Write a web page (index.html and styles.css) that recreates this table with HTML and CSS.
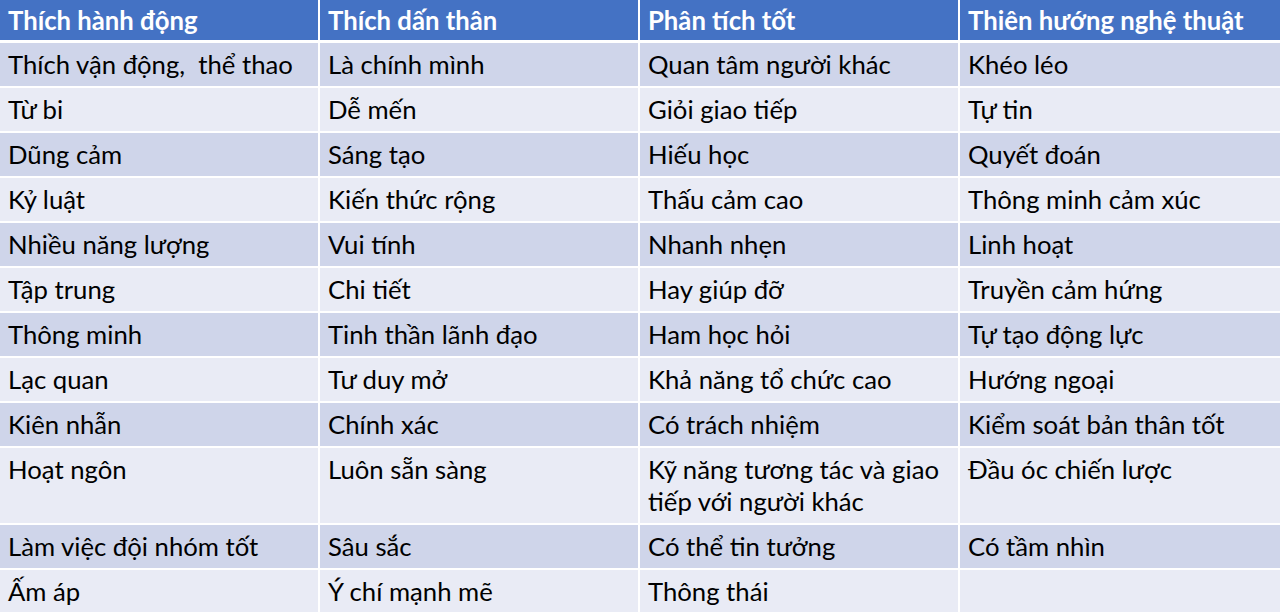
FILE: index.html
```html
<!DOCTYPE html>
<html lang="vi">
<head>
<meta charset="utf-8">
<link rel="stylesheet" href="styles.css">
</head>
<body>
<div class="table">
  <div class="row head"><div>Thích hành động</div><div>Thích dấn thân</div><div>Phân tích tốt</div><div>Thiên hướng nghệ thuật</div></div>
  <div class="row odd"><div>Thích vận động,&nbsp; thể thao</div><div>Là chính mình</div><div>Quan tâm người khác</div><div>Khéo léo</div></div>
  <div class="row even"><div>Từ bi</div><div>Dễ mến</div><div>Giỏi giao tiếp</div><div>Tự tin</div></div>
  <div class="row odd"><div>Dũng cảm</div><div>Sáng tạo</div><div>Hiếu học</div><div>Quyết đoán</div></div>
  <div class="row even"><div>Kỷ luật</div><div>Kiến thức rộng</div><div>Thấu cảm cao</div><div>Thông minh cảm xúc</div></div>
  <div class="row odd"><div>Nhiều năng lượng</div><div>Vui tính</div><div>Nhanh nhẹn</div><div>Linh hoạt</div></div>
  <div class="row even"><div>Tập trung</div><div>Chi tiết</div><div>Hay giúp đỡ</div><div>Truyền cảm hứng</div></div>
  <div class="row odd"><div>Thông minh</div><div>Tinh thần lãnh đạo</div><div>Ham học hỏi</div><div>Tự tạo động lực</div></div>
  <div class="row even"><div>Lạc quan</div><div>Tư duy mở</div><div>Khả năng tổ chức cao</div><div>Hướng ngoại</div></div>
  <div class="row odd"><div>Kiên nhẫn</div><div>Chính xác</div><div>Có trách nhiệm</div><div>Kiểm soát bản thân tốt</div></div>
  <div class="row even"><div>Hoạt ngôn</div><div>Luôn sẵn sàng</div><div>Kỹ năng tương tác và giao tiếp với người khác</div><div>Đầu óc chiến lược</div></div>
  <div class="row odd"><div>Làm việc đội nhóm tốt</div><div>Sâu sắc</div><div>Có thể tin tưởng</div><div>Có tầm nhìn</div></div>
  <div class="row even"><div>Ấm áp</div><div>Ý chí mạnh mẽ</div><div>Thông thái</div><div></div></div>
</div>
</body>
</html>
```
FILE: styles.css
```css
html, body {
  margin: 0;
  padding: 0;
  background: #ffffff;
  overflow: hidden;
}
body {
  width: 1280px;
  height: 612px;
}
.table {
  display: grid;
  grid-template-columns: 318px 318px 318px 320px;
  gap: 2px;
  background: #ffffff;
  font-family: "Lato", "Open Sans", sans-serif;
  font-size: 25.7px;
  color: #000000;
}
.row {
  display: contents;
}
.row > div {
  padding: 4.5px 9px 6.5px 8px;
  line-height: 32px;
  min-height: 32px;
}
.head > div {
  background: #4472c4;
  color: #ffffff;
  font-weight: 700;
  padding: 4px 9px 4px 8px;
  margin-bottom: 1px;
}
.odd > div {
  background: #cfd5ea;
}
.even > div {
  background: #e9ebf5;
}
```
